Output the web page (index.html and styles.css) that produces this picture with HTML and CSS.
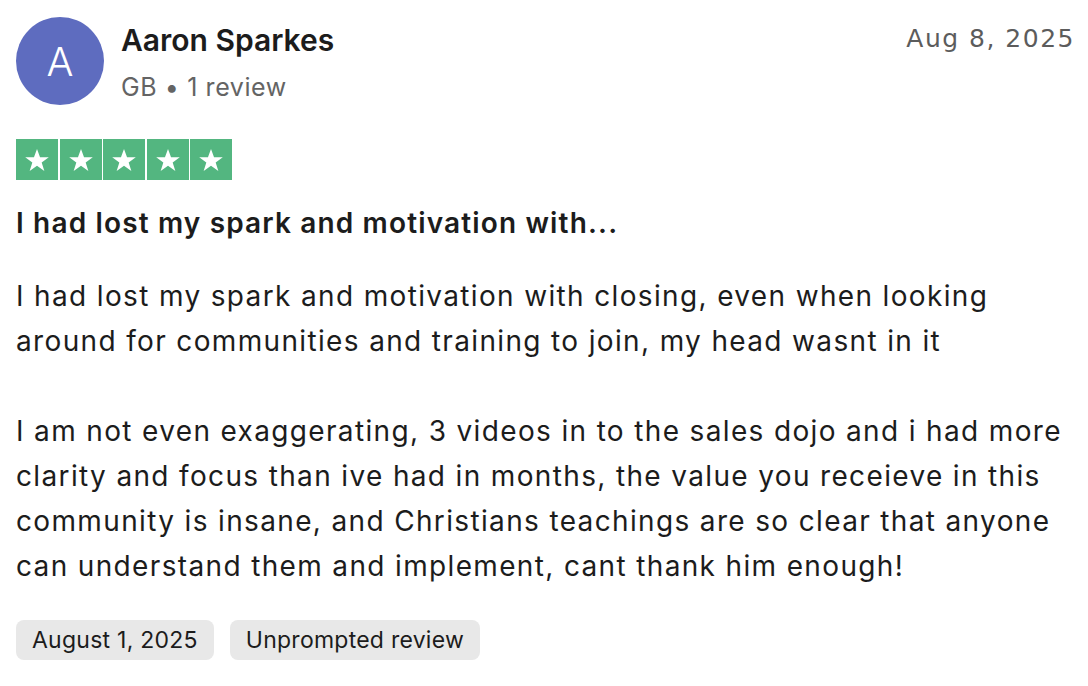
FILE: index.html
```html
<!DOCTYPE html>
<html lang="en">
<head>
	<meta charset="UTF-8">
	<title>Review - Aaron Sparkes</title>
	<link rel="stylesheet" href="styles.css">
</head>
<body>
	<div class="review">
		<div class="head">
			<div class="avatar">A</div>
			<div class="who">
				<div class="name">Aaron Sparkes</div>
				<div class="meta">GB &bull; 1 review</div>
			</div>
			<div class="date">Aug 8, 2025</div>
		</div>
		<div class="stars">
			<span class="star"><svg viewBox="0 0 24 24"><path d="M12 2.5l2.6 7.1h7.5l-6.1 4.5 2.3 7.3L12 17l-6.3 4.4 2.3-7.3-6.1-4.5h7.5z"/></svg></span>
			<span class="star"><svg viewBox="0 0 24 24"><path d="M12 2.5l2.6 7.1h7.5l-6.1 4.5 2.3 7.3L12 17l-6.3 4.4 2.3-7.3-6.1-4.5h7.5z"/></svg></span>
			<span class="star"><svg viewBox="0 0 24 24"><path d="M12 2.5l2.6 7.1h7.5l-6.1 4.5 2.3 7.3L12 17l-6.3 4.4 2.3-7.3-6.1-4.5h7.5z"/></svg></span>
			<span class="star"><svg viewBox="0 0 24 24"><path d="M12 2.5l2.6 7.1h7.5l-6.1 4.5 2.3 7.3L12 17l-6.3 4.4 2.3-7.3-6.1-4.5h7.5z"/></svg></span>
			<span class="star"><svg viewBox="0 0 24 24"><path d="M12 2.5l2.6 7.1h7.5l-6.1 4.5 2.3 7.3L12 17l-6.3 4.4 2.3-7.3-6.1-4.5h7.5z"/></svg></span>
		</div>
		<h2 class="title">I had lost my spark and motivation with...</h2>
		<p class="text">I had lost my spark and motivation with closing, even when looking<br>around for communities and training to join, my head wasnt in it</p>
		<p class="text">I am not even exaggerating, 3 videos in to the sales dojo and i had more<br>clarity and focus than ive had in months, the value you receieve in this<br>community is insane, and Christians teachings are so clear that anyone<br>can understand them and implement, cant thank him enough!</p>
		<div class="tags">
			<span class="tag">August 1, 2025</span>
			<span class="tag">Unprompted review</span>
		</div>
	</div>
</body>
</html>
```

FILE: styles.css
```css
*{
	margin: 0;
	padding: 0;
	box-sizing: border-box;
}
body{
	background: #fff;
	color: #1c1c1c;
	font-family: Inter, "Liberation Sans", sans-serif;
}
.review{
	padding: 17px 14px 0 16px;
}
.head{
	display: flex;
	align-items: flex-start;
}
.avatar{
	width: 88px;
	height: 88px;
	border-radius: 50%;
	background-color: #5e6cbf;
	color: #fff;
	font-size: 40px;
	font-weight: 300;
	line-height: 90px;
	text-align: center;
	flex-shrink: 0;
}
.who{
	margin-left: 17px;
	flex: 1;
}
.name{
	font-size: 30px;
	font-weight: 600;
	line-height: 46px;
}
.meta{
	font-size: 25px;
	color: #646464;
	line-height: 48px;
	letter-spacing: 0.6px;
}
.date{
	font-family: "DejaVu Sans", sans-serif;
	font-size: 25px;
	color: #5c5c5c;
	line-height: 44px;
	letter-spacing: 1.5px;
	margin-right: -1px;
}
.stars{
	display: flex;
	gap: 1.5px;
	margin-top: 28px;
}
.star{
	width: 42px;
	height: 41px;
	background-color: #53b680;
	display: flex;
	align-items: center;
	justify-content: center;
}
.star svg{
	width: 28px;
	height: 28px;
	fill: #fff;
}
.title{
	font-size: 28px;
	font-weight: 600;
	line-height: 40px;
	letter-spacing: 1.15px;
	margin-top: 23px;
}
.text{
	font-size: 28px;
	line-height: 45px;
	letter-spacing: 1.35px;
	margin-top: 31px;
}
.text + .text{
	margin-top: 45px;
}
.tags{
	display: flex;
	gap: 16px;
	margin-top: 31px;
}
.tag{
	background-color: #e8e8e8;
	border-radius: 8px;
	font-size: 23px;
	line-height: 40px;
	letter-spacing: 0.25px;
	padding: 0 16px;
}
```
